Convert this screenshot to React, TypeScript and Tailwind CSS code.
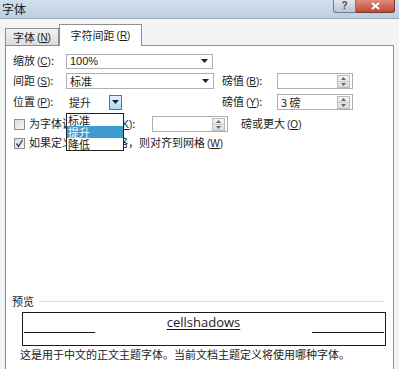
import React from "react";

const cjk = "font-['Noto_Sans_CJK_SC',sans-serif]";

function K({ c }: { c: string }) {
  return (
    <span className="ml-[2px] font-['Liberation_Sans',sans-serif] text-[10px]">
      (<span className="underline underline-offset-1">{c}</span>)
    </span>
  );
}

function Arrow() {
  return (
    <svg width="7" height="4" viewBox="0 0 7 4">
      <path d="M0 0H7L3.5 4Z" fill="#222" />
    </svg>
  );
}

function Spinner() {
  return (
    <div className="flex h-[13px] w-[13px] flex-col border border-[#b8bcc2] bg-gradient-to-b from-[#f4f4f4] to-[#dcdcdc]">
      <div className="flex flex-1 items-center justify-center border-b border-[#c8c8c8]">
        <svg width="5" height="3" viewBox="0 0 5 3">
          <path d="M0 3H5L2.5 0Z" fill="#666" />
        </svg>
      </div>
      <div className="flex flex-1 items-center justify-center">
        <svg width="5" height="3" viewBox="0 0 5 3">
          <path d="M0 0H5L2.5 3Z" fill="#666" />
        </svg>
      </div>
    </div>
  );
}

function SpinInput({ w, value }: { w: string; value?: string }) {
  return (
    <div className={`flex h-[16px] items-center justify-between border border-[#a9b0b8] bg-white pl-[3px] pr-[2px] ${w}`}>
      <span className="leading-[13px]">{value}</span>
      <Spinner />
    </div>
  );
}

function Checkbox({ checked }: { checked?: boolean }) {
  return (
    <div className="flex h-[11px] w-[11px] items-center justify-center border border-[#8e8f8f] bg-gradient-to-br from-[#dedede] to-[#f6f6f6]">
      {checked && (
        <svg width="9" height="9" viewBox="0 0 9 9">
          <path d="M1.5 4.5L3.5 7.5L7.5 1" stroke="#3a3f55" strokeWidth="1.4" fill="none" />
        </svg>
      )}
    </div>
  );
}

export default function App() {
  return (
    <div className={`relative flex h-[369px] w-[399px] flex-col overflow-hidden bg-[#f3f4f6] text-[11px] text-[#1b1b1b] ${cjk}`}>
      {/* Title bar */}
      <div className="flex h-[19px] shrink-0 items-start justify-between border-b border-[#9aa9b8] bg-gradient-to-b from-[#d3e0ec] to-[#bccfe2]">
        <span className="pl-[2px] pt-[2px] text-[12px] leading-[14px] text-[#1a1a1a]">字体</span>
        <div className="mr-[4px] flex">
          <div className="flex h-[13px] w-[23px] items-center justify-center rounded-bl-[3px] border border-t-0 border-[#6f7f90] bg-gradient-to-b from-[#e2e8ee] to-[#b9c5d1] font-['Liberation_Sans',sans-serif] text-[10px] font-bold leading-none text-[#44525f]">
            ?
          </div>
          <div className="flex h-[13px] w-[39px] items-center justify-center rounded-br-[3px] border border-l-0 border-t-0 border-[#7a3a30] bg-gradient-to-b from-[#e08a7c] to-[#c2473a]">
            <svg width="9" height="8" viewBox="0 0 9 8">
              <path d="M1 1L8 7M8 1L1 7" stroke="#fff" strokeWidth="2" />
            </svg>
          </div>
        </div>
      </div>

      {/* Tabs */}
      <div className="mt-[5px] flex h-[21px] shrink-0 items-end pl-[5px]">
        <div className="flex h-[17px] w-[54px] items-center justify-center border border-b-0 border-[#8e8f8f] bg-gradient-to-b from-[#f2f2f2] to-[#dcdcdc] leading-[13px]">
          字体<K c="N" />
        </div>
        <div className="relative z-10 -mb-px flex h-[22px] w-[83px] items-start justify-center border border-b-0 border-[#8e8f8f] bg-white pt-[4px] leading-[13px]">
          字符间距<K c="R" />
        </div>
      </div>

      {/* Panel */}
      <div className="ml-[5px] flex h-[340px] w-[389px] shrink-0 flex-col border border-[#8e8f8f] bg-white pl-[7px]">
        {/* Row 1 */}
        <div className="mt-[7px] flex h-[16px] items-center">
          <span className="w-[53px] leading-[13px]">缩放<K c="C" />:</span>
          <div className="flex h-[15px] w-[147px] items-center justify-between border border-[#a9b0b8] bg-white pl-[3px] pr-[4px]">
            <span className="font-['Liberation_Sans',sans-serif] text-[11px] leading-[13px]">100%</span>
            <Arrow />
          </div>
        </div>

        {/* Row 2 */}
        <div className="mt-[4px] flex h-[16px] items-center">
          <span className="w-[53px] leading-[13px]">间距<K c="S" />:</span>
          <div className="flex h-[16px] w-[148px] items-center justify-between border border-[#a9b0b8] bg-white pl-[3px] pr-[4px]">
            <span className="leading-[13px]">标准</span>
            <Arrow />
          </div>
          <span className="ml-[8px] w-[55px] leading-[13px]">磅值<K c="B" />:</span>
          <SpinInput w="w-[76px]" />
        </div>

        {/* Row 3 */}
        <div className="mt-[5px] flex h-[16px] items-center">
          <span className="w-[53px] leading-[13px]">位置<K c="P" />:</span>
          <div className="relative flex h-[16px] w-[58px] items-center justify-between bg-white pl-[3px] pr-[2px]">
            <span className="leading-[13px]">提升</span>
            <div className="flex h-[15px] w-[13px] items-center justify-center border border-[#3c7fb1] bg-gradient-to-b from-[#e5f4fc] to-[#a7d9f5]">
              <Arrow />
            </div>
            {/* Dropdown list */}
            <div className="absolute left-0 top-[19px] z-20 flex w-[58px] flex-col border border-[#222] bg-white">
              <div className="h-[12px] pl-[1px] leading-[12px]">标准</div>
              <div className="h-[12px] bg-[#3d9bd0] pl-[1px] leading-[12px] text-white">提升</div>
              <div className="h-[12px] pl-[1px] leading-[12px]">降低</div>
            </div>
          </div>
          <span className="ml-[98px] w-[55px] leading-[13px]">磅值<K c="Y" />:</span>
          <SpinInput w="w-[76px]" value="3 磅" />
        </div>

        {/* Row 4 */}
        <div className="mt-[6px] flex h-[16px] items-center">
          <div className="ml-[1px] mr-[4px]">
            <Checkbox />
          </div>
          <span className="w-[123px] leading-[13px]">为字体调整字间距<K c="K" />:</span>
          <SpinInput w="w-[76px]" />
          <span className="ml-[13px] leading-[13px]">磅或更大<K c="O" /></span>
        </div>

        {/* Row 5 */}
        <div className="mt-[3px] flex h-[16px] items-center">
          <div className="ml-[1px] mr-[4px]">
            <Checkbox checked />
          </div>
          <span className="leading-[13px]">如果定义了文档网格，则对齐到网格<K c="W" /></span>
        </div>

        {/* Preview label */}
        <div className="-ml-px mt-[143px] flex h-[14px] items-center">
          <span className="leading-[13px]">预览</span>
          <div className="ml-[5px] h-px w-[346px] bg-[#d9dfe4]" />
        </div>

        {/* Preview box */}
        <div className="ml-[9px] mt-[4px] flex h-[34px] w-[364px] items-start border border-[#1b1b1b] bg-white pl-[1px] pr-[1px]">
          <div className="h-[20px] w-[71px] border-b border-[#1b1b1b]" />
          <div className="flex-1 text-center">
            <span className="font-['Open_Sans',sans-serif] text-[13px] leading-[18px] underline underline-offset-[2px]">
              cellshadows
            </span>
          </div>
          <div className="h-[20px] w-[72px] border-b border-[#1b1b1b]" />
        </div>

        {/* Description */}
        <div className="ml-[7px] mt-[1px] leading-[14px]">这是用于中文的正文主题字体。当前文档主题定义将使用哪种字体。</div>
      </div>
    </div>
  );
}
